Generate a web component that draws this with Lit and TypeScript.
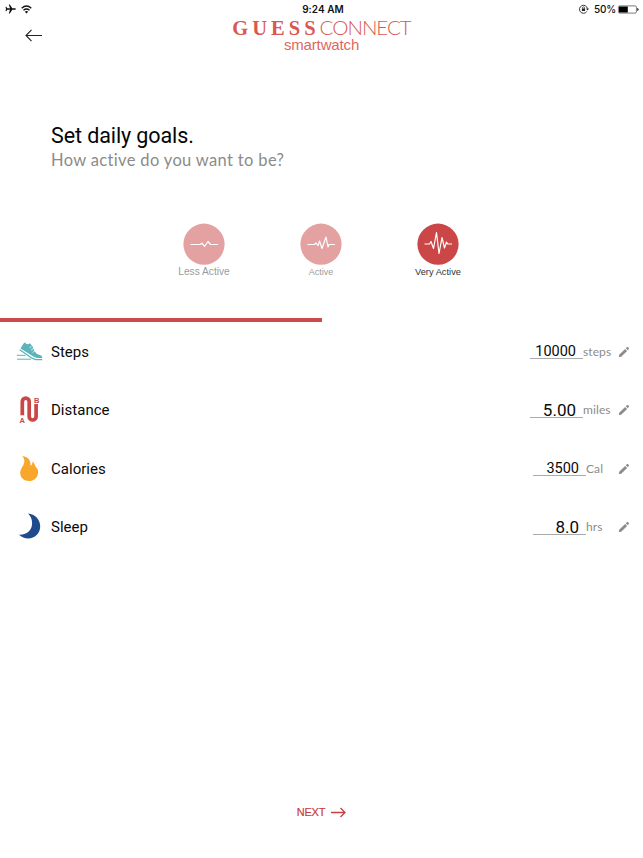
import { LitElement, html, css, svg } from "lit";
import { customElement } from "lit/decorators.js";

const pulses = {
  less: "M7.5 21.5H17L19 20.2L21.5 23.5L25 18.5L27.5 21.5H35",
  active: "M7.5 21.5H14.5L16 20L18 22.5L19.5 18L22 25.5L26 14L28 24L29 21.5H35",
  very: "M7.5 21H12.5L14 18.5L16.5 25.5L19.5 9.5L22 30.5L25 14.5L27.5 25L29.5 19L30.5 21H35",
};

const levels = [
  { id: "less", label: "Less Active", pulse: pulses.less },
  { id: "mid", label: "Active", pulse: pulses.active },
  { id: "very", label: "Very Active", pulse: pulses.very },
];

const icons = {
  steps: svg`
    <path fill="#5cb3b9" d="M10.6 10.2L13.6 5.6L15.3 4.3C15.6 6.6 18.2 6.8 20 5.3L22.4 8.2L24 12.4L26.6 15.8L31 17.4C32.2 18 32.5 19 32 20H27L23.8 18.8L10.6 10.6Z"/>
    <path fill="none" stroke="#5cb3b9" stroke-width="1.3" d="M9.8 11.7L22 20.2L25.8 21.7H32.2"/>
    <path fill="none" stroke="#5cb3b9" stroke-width="1" d="M7 17.3H15.5M7 21.2H21"/>
    <path fill="none" stroke="#fff" stroke-width=".7" d="M19.4 9.7L21.6 8.6M20.9 12.1L23.2 10.9M22.5 14.4L24.8 13.2"/>`,
  distance: svg`
    <path fill="none" stroke="#cb4647" stroke-width="3.7" d="M12.3 19.2V5.7A3.45 3.6 0 0 1 19.2 5.7V20.4A3.45 3.6 0 0 0 26.1 20.4V8"/>
    <text x="9.5" y="26.7" class="pin">A</text><text x="24" y="6.5" class="pin">B</text>`,
  calories: svg`
    <path fill="#f9a72b" d="M12.3 1C18 1.8 21 5.2 20.5 10.7C22.2 9.9 22.6 8.6 22.4 6.4C24.4 7.8 24.6 9.5 25.5 11.5C27.5 13.4 28.3 15 28.1 17.7C27.7 22.7 24 26 19.1 26C14 26 10.4 22.8 10.2 18C10.1 14.6 12 12.5 13.5 9.7C15 6.5 14.6 3.8 12.3 1Z"/>`,
  sleep: svg`
    <path fill="#1e4b8c" d="M18 .5C25 1.1 30.2 6.5 30.2 13.2C30.2 20.2 24.8 25.5 18.2 25.5C14.8 25.5 11.4 24.2 9 21.8C17.7 22 22.3 16.8 22.1 9.8C22 6 20.5 2.8 18 .5Z"/>`,
};

const goals = [
  { id: "steps", name: "Steps", value: "10000", unit: "steps", icon: icons.steps },
  { id: "distance", name: "Distance", value: "5.00", unit: "miles", icon: icons.distance },
  { id: "calories", name: "Calories", value: "3500", unit: "Cal", icon: icons.calories },
  { id: "sleep", name: "Sleep", value: "8.0", unit: "hrs", icon: icons.sleep },
];

@customElement("app-root")
export class AppRoot extends LitElement {
  static styles = css`
    :host { display: flex; flex-direction: column; width: 643px; height: 858px; background: #fff; overflow: hidden; color: #0a0a0a; font-family: Roboto, sans-serif; }
    * { box-sizing: border-box; white-space: nowrap; }
    svg { display: block; flex: none; overflow: visible; }
    .status { display: grid; grid-template-columns: 1fr auto 1fr; align-items: center; height: 18px; padding: 0 4px 0 5px; font: 500 10px/18px Inter, sans-serif; color: #111; }
    .signals, .power { display: flex; align-items: center; }
    .signals { gap: 5px; }
    .power { justify-content: flex-end; }
    .time { font-weight: 600; font-size: 10px; letter-spacing: .05px; padding-left: 2px; }
    .charge { margin: 0 2px 0 5px; font-size: 10px; letter-spacing: -.2px; }
    header { display: grid; grid-template-columns: 1fr auto 1fr; height: 42px; }
    .back { margin: 10px 0 0 25px; }
    .brand { display: flex; flex-direction: column; align-items: center; color: #dc5750; }
    .logo { display: flex; align-items: baseline; height: 19px; line-height: 19px; }
    .guess { font: 700 20.5px/19px "Liberation Serif", serif; letter-spacing: 4px; }
    .connect { font: 300 20.5px/19px Lato, sans-serif; letter-spacing: -1px; }
    .watch { font: 15px/15px "Liberation Sans", sans-serif; letter-spacing: -.15px; color: #e0675f; }
    .intro { padding: 64px 0 0 51px; height: 163px; }
    h1 { margin: 0; font: 400 21.5px/24px Roboto, sans-serif; letter-spacing: -.1px; color: #050505; }
    .question { font: 400 16.5px/24px Lato, sans-serif; letter-spacing: .34px; color: #8b8b8b; }
    .levels { display: grid; grid-template-columns: repeat(3, 117px); justify-content: center; height: 95px; padding-right: 1px; }
    .level { display: flex; flex-direction: column; align-items: center; opacity: .5; font: 9px/14px "Liberation Sans", sans-serif; color: #333; }
    .level.less { font-size: 10.2px; }
    .level.very { opacity: 1; font-size: 9.3px; }
    .progress { width: 322px; height: 4px; background: #cb4b4b; flex: none; }
    .goals { display: grid; grid-template-rows: repeat(4, 58.5px); padding-top: .5px; }
    .goal { display: grid; grid-template-columns: 41px 1fr auto 35px 25px; align-items: center; padding-left: 10px; }
    .goal > svg:first-child { margin-bottom: 1px; }
    .name { font-size: 15px; letter-spacing: .02px; }
    .value { width: 53.5px; height: 14px; border-bottom: 1px solid #aaa; text-align: right; padding-right: 7px; font-size: 14.5px; line-height: 14px; }
    .distance .value, .sleep .value { font-size: 17px; height: 15px; line-height: 15px; }
    .unit { margin-bottom: 1.5px; font: 12px/15px Lato, sans-serif; letter-spacing: .1px; color: #8b8b8b; }
    .calories, .sleep { grid-template-columns: 41px 1fr auto 32px 25px; }
    .pin { font: 700 7.5px "Liberation Sans", sans-serif; fill: #cb4647; }
    .next { display: flex; justify-content: center; align-items: center; gap: 6px; margin-top: 245.5px; height: 20px; font: 11px/20px "Liberation Sans", sans-serif; letter-spacing: -.15px; color: #c8403f; -webkit-text-stroke: .2px #c8403f; }
  `;

  render() {
    return html`
      <div class="status">
        <div class="signals">
          <svg width="11" height="10" viewBox="0 0 11 10"><path fill="#111" d="M11 5Q11 5.8 9.8 5.8H7.3L4.8 9.5H3.8L5 5.8H2.3L1.3 7.2H.5L1 5L.5 2.8H1.3L2.3 4.2H5L3.8 .5H4.8L7.3 4.2H9.8Q11 4.2 11 5Z"/></svg>
          <svg width="11" height="9" viewBox="0 0 11 9"><path fill="none" stroke="#111" stroke-width="1.4" d="M.7 3.2Q5.5-1 10.3 3.2M2.5 5.2Q5.5 2.7 8.5 5.2"/><path fill="#111" d="M3.8 6.7Q5.5 5.4 7.2 6.7L5.5 8.5Z"/></svg>
        </div>
        <span class="time">9:24 AM</span>
        <div class="power">
          <svg width="10" height="10" viewBox="0 0 10 10"><path fill="none" stroke="#222" stroke-width=".9" d="M7.8 7.5A4 4 0 1 1 8.4 4.5"/><path fill="#222" d="M7 4.6H10L8.5 6.5ZM2.9 4.5H6.1V7H2.9Z"/><path fill="none" stroke="#222" stroke-width=".7" d="M3.5 4.7V3.8A1 1 0 0 1 5.5 3.8V4.7"/></svg>
          <span class="charge">50%</span>
          <svg width="21" height="9" viewBox="0 0 21 9"><rect x=".4" y=".9" width="18" height="7.2" rx="1.3" fill="none" stroke="#444" stroke-width=".7"/><rect x="1" y="1.5" width="8.8" height="6" fill="#000"/><path fill="#222" d="M19.2 3Q20.6 3.3 20.6 4.5T19.2 6Z"/></svg>
        </div>
      </div>
      <header>
        <svg class="back" width="18" height="14" viewBox="0 0 18 14"><path fill="none" stroke="#222" stroke-width="1.1" d="M17 7.5H1M6.5 1.8L1 7.5L6.5 13.2"/></svg>
        <div class="brand">
          <div class="logo"><span class="guess">GUESS</span><span class="connect">CONNECT</span></div>
          <div class="watch">smartwatch</div>
        </div>
      </header>
      <section class="intro">
        <h1>Set daily goals.</h1>
        <div class="question">How active do you want to be?</div>
      </section>
      <section class="levels">
        ${levels.map((l) => html`
          <div class="level ${l.id}">
            <svg width="42" height="42" viewBox="0 0 42 42"><circle cx="21" cy="21.2" r="20.6" fill="#cb4647"/><path d=${l.pulse} fill="none" stroke="#fff" stroke-width="1.2" stroke-linejoin="round"/></svg>
            <span>${l.label}</span>
          </div>`)}
      </section>
      <div class="progress"></div>
      <section class="goals">
        ${goals.map((g) => html`
          <div class="goal ${g.id}">
            <svg width="36" height="27" viewBox="0 0 36 27">${g.icon}</svg>
            <span class="name">${g.name}</span>
            <span class="value">${g.value}</span>
            <span class="unit">${g.unit}</span>
            <svg width="12" height="12" viewBox="0 0 12 12"><path fill="#8b8b8b" d="M.8 11.1L1.2 8.7L7.1 2.9L9.1 4.9L3.2 10.7ZM7.8 2.2L9 1.1Q9.6.7 10.2 1.3L10.8 1.9Q11.2 2.5 10.8 3.1L9.8 4.2Z"/></svg>
          </div>`)}
      </section>
      <div class="next"><span>NEXT</span><svg width="15" height="11" viewBox="0 0 15 11"><path fill="none" stroke="#c8403f" stroke-width="1.3" d="M0 5.5H14M9.5 1L14 5.5L9.5 10"/></svg></div>
    `;
  }
}
